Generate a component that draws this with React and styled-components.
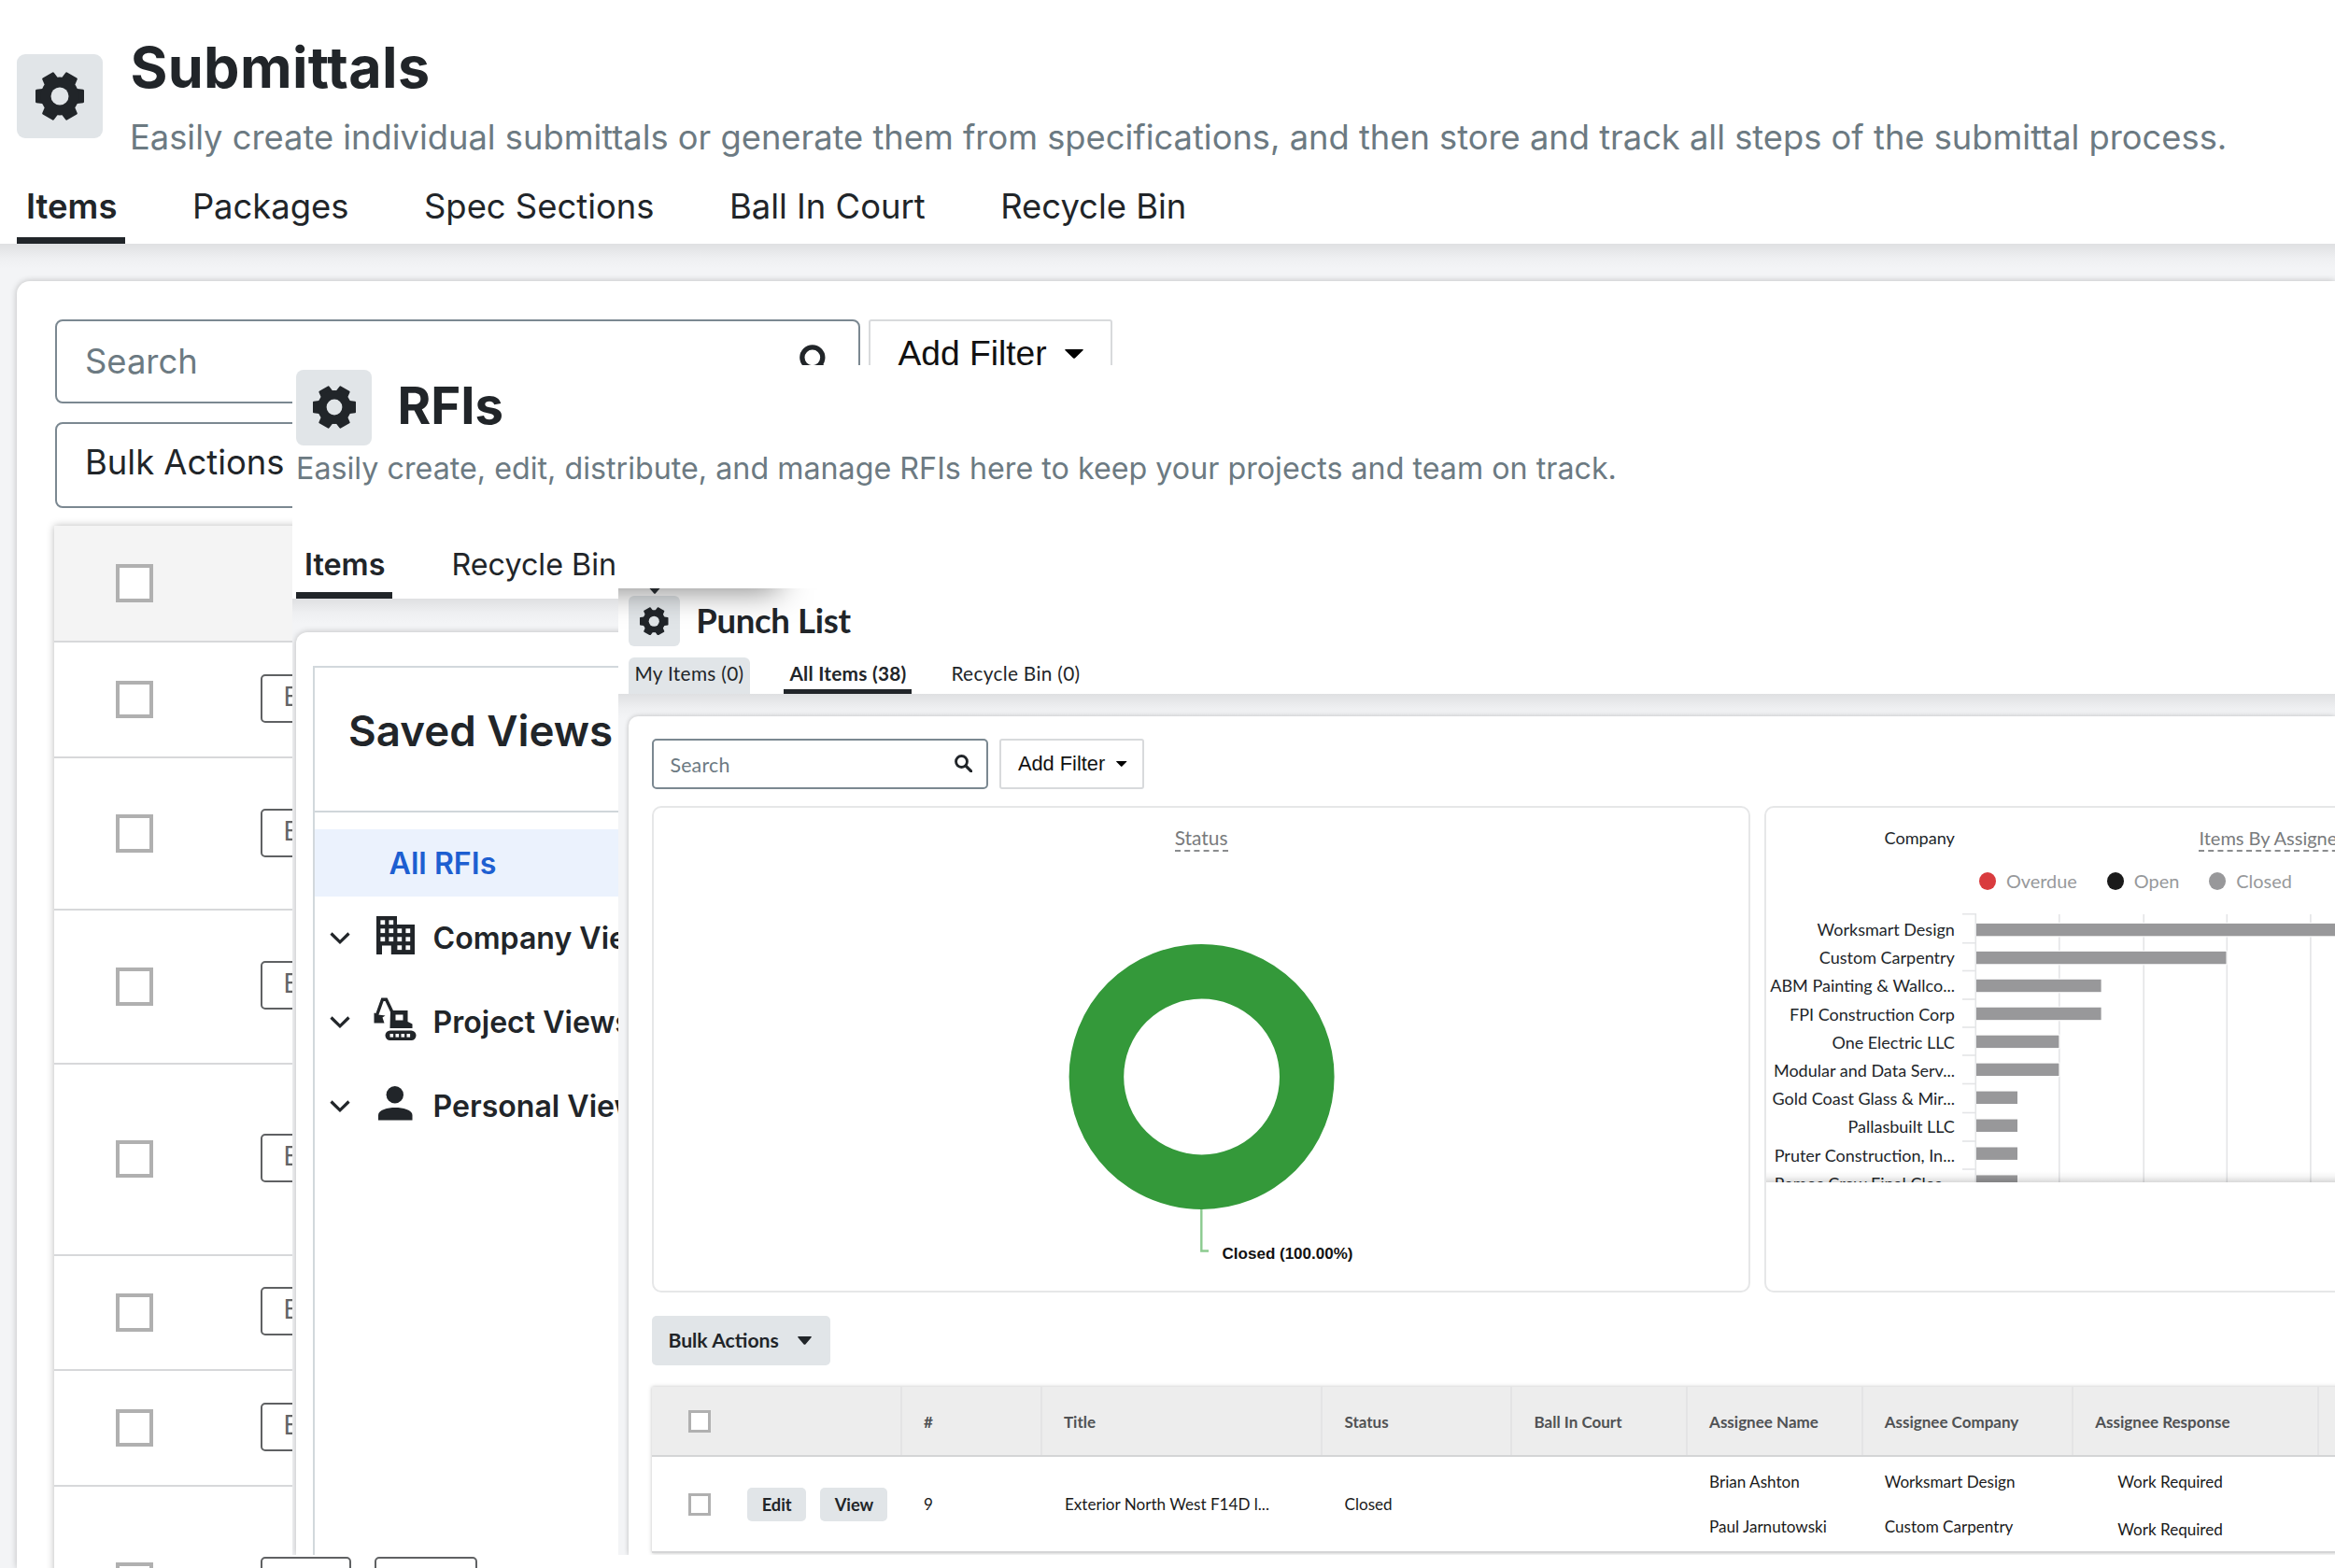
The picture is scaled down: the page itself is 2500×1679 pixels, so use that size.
import React from "react";
import styled, { createGlobalStyle, css } from "styled-components";

const INK = "#212529";
const MUTED = "#6c7a82";
const INTER = `"Inter", "Liberation Sans", sans-serif`;
const LATO = `"Lato", "Liberation Sans", sans-serif`;
const ARIAL = `"Liberation Sans", Arial, sans-serif`;

const Global = createGlobalStyle`
  *, *::before, *::after { box-sizing: border-box; }
  html, body { margin: 0; padding: 0; background: #fff; }
  body { font-family: ${INTER}; color: ${INK}; overflow: hidden; }
`;

/* ---------- shared parts ---------- */

const Desktop = styled.main`
  position: relative;
  width: 2500px;
  height: 1679px;
  overflow: hidden;
  background: #fff;
`;

const windowBase = css`
  position: absolute;
  display: flex;
  flex-direction: column;
  overflow: hidden;
  background: #fff;
  white-space: nowrap;
`;

const GearTile = styled.div`
  display: flex;
  align-items: center;
  justify-content: center;
  flex: none;
  width: ${(p) => p.$w}px;
  height: ${(p) => p.$h}px;
  border-radius: ${(p) => p.$r}px;
  background: #e1e5e8;
  color: ${INK};
`;

const Canvas = styled.section`
  flex: 1;
  min-height: 0;
  display: flex;
  flex-direction: column;
  padding: ${(p) => p.$pad};
  background: linear-gradient(to bottom, #dfe0e2 0, #e6e7e9 7px, #eeeff1 15px, #f3f4f6 26px);
`;

const Sheet = styled.div`
  flex: 1;
  min-height: 0;
  display: flex;
  flex-direction: column;
  align-items: flex-start;
  padding: ${(p) => p.$pad};
  border-radius: ${(p) => p.$r}px 0 0 0;
  background: #fff;
  box-shadow: 0 0 ${(p) => p.$blur || 7}px rgba(0, 0, 0, 0.24);
`;

const Checkbox = styled.span`
  flex: none;
  width: ${(p) => p.$s}px;
  height: ${(p) => p.$s}px;
  border: ${(p) => p.$b}px solid #b0b0b0;
  background: #fff;
`;

const CaretShape = styled.svg`
  flex: none;
  display: block;
`;

const Caret = ({ w, h, color = "#000" }) => (
  <CaretShape width={w} height={h} viewBox="0 0 10 6" preserveAspectRatio="none">
    <path d="M0.6 0h8.8q1 0 .3.8L5.6 5.6q-.6.6-1.2 0L.3.8Q-.4 0 .6 0z" fill={color} />
  </CaretShape>
);

const Gear = ({ size }) => (
  <svg width={size} height={size} viewBox="-26 -26 52 52">
    <g fill="currentColor">
      {[0, 60, 120, 180, 240, 300].map((a) => (
        <path key={a} transform={`rotate(${a})`} d="M13 -12 L18.5 -8 L25 -7.2 Q26 -7 26 -6 L26 6 Q26 7 25 7.2 L18.5 8 L13 12z" />
      ))}
      <circle r="20.4" />
    </g>
    <circle r="9.5" fill="#e1e5e8" />
  </svg>
);

const Magnifier = ({ size }) => (
  <svg width={size} height={size} viewBox="0 0 19 19" fill="none" stroke={INK} strokeLinecap="round">
    <circle cx="7.3" cy="7.3" r="5.8" strokeWidth="2.8" />
    <path d="M11.8 11.8L17.3 17.3" strokeWidth="3.1" />
  </svg>
);

const searchBase = css`
  display: flex;
  align-items: center;
  justify-content: space-between;
  border: 2px solid #7b8891;
  background: #fff;
  color: ${MUTED};
`;

const filterBase = css`
  display: flex;
  align-items: center;
  border: 2px solid #d8dadc;
  border-radius: 3px;
  background: #fff;
  color: #111;
  font-family: ${ARIAL};
`;

/* ---------- Submittals ---------- */

const SubmittalsWindow = styled.section`
  ${windowBase}
  inset: 0;
`;

const SubHeader = styled.header`
  display: flex;
  flex-direction: column;
  justify-content: space-between;
  flex: none;
  height: 261px;
  padding-left: 18px;
`;

const SubHeading = styled.div`
  display: flex;
  gap: 29.5px;
  & > :first-child { margin-top: 58px; }
`;

const SubTitle = styled.h1`
  margin: 42px 0 23px;
  font: 700 61px/60px ${INTER};
  letter-spacing: 0.35px;
`;

const SubLead = styled.p`
  margin: 0 0 0 -0.5px;
  font: 400 36.3px/44px ${INTER};
  color: ${MUTED};
`;

const SubTabs = styled.nav`
  display: flex;
  gap: 62px;
  height: 62px;
`;

const SubTab = styled.span`
  padding: 0 8.5px 0 10px;
  font: ${(p) => (p.$on ? 600 : 400)} 36.4px/44px ${INTER};
  border-bottom: 7px solid ${(p) => (p.$on ? INK : "transparent")};
`;

const SubFilters = styled.div`
  display: flex;
  flex: none;
  gap: 9px;
`;

const SubSearch = styled.div`
  ${searchBase}
  width: 862px;
  height: 90px;
  padding: 0 27px 0 30.5px;
  border-radius: 8px;
  font: 400 36.4px/44px ${INTER};
`;

const SubAddFilter = styled.div`
  ${filterBase}
  width: 261px;
  height: 73px;
  padding-left: 30px;
  gap: 19px;
  font-size: 37.2px;
`;

const SubBulk = styled.div`
  flex: none;
  width: 400px;
  height: 92px;
  margin-top: 20px;
  padding: 17px 30.5px;
  border: 2px solid #7b8891;
  border-radius: 8px;
  font: 400 36.4px/48px ${INTER};
`;

const SubTable = styled.div`
  flex: none;
  width: 2500px;
  margin: 19px 0 0 -0.5px;
  box-shadow: 0 0 8px rgba(0, 0, 0, 0.28);
  background: #fff;
`;

const SubRow = styled.div`
  display: flex;
  align-items: center;
  height: ${(p) => p.$h}px;
  padding-left: 65.5px;
  border-bottom: 2px solid #d7d8da;
  background: ${(p) => (p.$head ? "#f4f4f4" : "#fff")};
`;

const SubActions = styled.div`
  display: flex;
  gap: 25px;
  margin: 0 0 2px 115px;
`;

const SubButton = styled.span`
  width: ${(p) => p.$w}px;
  height: 52px;
  padding-left: 22.5px;
  border: 2px solid #5f6163;
  border-radius: 5px;
  font: 400 28px/45px ${INTER};
  color: #626466;
`;

function Submittals() {
  const rows = [124, 163, 164.5, 205, 123.5, 124, 205];
  return (
    <SubmittalsWindow>
      <SubHeader>
        <SubHeading>
          <GearTile $w={92} $h={90} $r={9}><Gear size={52} /></GearTile>
          <div>
            <SubTitle>Submittals</SubTitle>
            <SubLead>
              Easily create individual submittals or generate them from specifications, and then store and track all steps of the submittal process.
            </SubLead>
          </div>
        </SubHeading>
        <SubTabs>
          <SubTab $on>Items</SubTab>
          <SubTab>Packages</SubTab>
          <SubTab>Spec Sections</SubTab>
          <SubTab>Ball In Court</SubTab>
          <SubTab>Recycle Bin</SubTab>
        </SubTabs>
      </SubHeader>
      <Canvas $pad="40px 0 0 18px">
        <Sheet $pad="41px 0 0 40.5px" $r={14}>
          <SubFilters>
            <SubSearch>Search<Magnifier size={36} /></SubSearch>
            <SubAddFilter>Add Filter<Caret w={20} h={10} /></SubAddFilter>
          </SubFilters>
          <SubBulk>Bulk Actions</SubBulk>
          <SubTable>
            <SubRow $head $h={125}><Checkbox $s={40.5} $b={4} /></SubRow>
            {rows.map((h, i) => (
              <SubRow key={i} $h={h}>
                <Checkbox $s={40.5} $b={4} />
                <SubActions>
                  <SubButton $w={96.5}>{i < 6 && "Edit"}</SubButton>
                  {i === 6 && <SubButton $w={110} />}
                </SubActions>
              </SubRow>
            ))}
          </SubTable>
        </Sheet>
      </Canvas>
    </SubmittalsWindow>
  );
}

/* ---------- RFIs ---------- */

const RfiWindow = styled.section`
  ${windowBase}
  left: 313px;
  top: 391px;
  width: 2187px;
  height: 1274px;
`;

const RfiHeader = styled.header`
  display: flex;
  flex-direction: column;
  flex: none;
  height: 250px;
  padding: 4.5px 0 0 4px;
`;

const RfiHeading = styled.div`
  display: flex;
  align-items: center;
  gap: 27.5px;
`;

const RfiTitle = styled.h1`
  margin: 0 0 4px;
  font: 700 54.5px/60px ${INTER};
`;

const RfiLead = styled.p`
  margin: 5px 0 0;
  font: 400 32.25px/40px ${INTER};
  color: ${MUTED};
`;

const RfiTabs = styled.nav`
  display: flex;
  gap: 54.5px;
  height: 57px;
  margin-top: auto;
`;

const RfiTab = styled.span`
  padding: 1px 7.5px 0 9px;
  font: ${(p) => (p.$on ? 600 : 400)} 32.3px/40px ${INTER};
  border-bottom: 7px solid ${(p) => (p.$on ? INK : "transparent")};
`;

const ViewsPanel = styled.aside`
  width: 700px;
  flex: 1;
  display: flex;
  flex-direction: column;
  border: solid #d2d8dc;
  border-width: 2px 0 0 2px;
`;

const ViewsTitle = styled.h2`
  flex: none;
  height: 155px;
  margin: 0 0 18px;
  padding: 40px 0 0 36px;
  border-bottom: 2px solid #d0d6da;
  font: 600 45.7px/56px ${INTER};
`;

const SelectedView = styled.div`
  flex: none;
  height: 72px;
  padding-left: 79.5px;
  background: #ebf2fd;
  color: #1d5fd1;
  font: 600 32.2px/73px ${INTER};
`;

const ViewGroup = styled.div`
  display: flex;
  align-items: center;
  height: 90px;
  padding-left: 15.5px;
  font: 600 32.1px/40px ${INTER};
`;

const GroupIcon = styled.svg`
  flex: none;
  margin: 0 18px 8px 25px;
`;

const Chevron = () => (
  <svg width="22" height="14" viewBox="0 0 22 14" fill="none" stroke={INK} strokeWidth="3.2">
    <path d="M1.5 1.5L11 10.8L20.5 1.5" />
  </svg>
);

const BuildingIcon = () => {
  const cells = [[0, 0], [1, 0], [0, 1], [1, 1], [2, 1], [3, 1], [0, 2], [1, 2], [2, 2], [3, 2], [2, 3], [3, 3]];
  return (
    <GroupIcon width="46" height="46" viewBox="-3 -3 46 46">
      <path d="M0 0H22V9H41V41H15.8V31.5H6V41H0z" fill={INK} />
      {cells.map(([x, y]) => (
        <rect key={`${x}-${y}`} x={4.4 + x * 9} y={4.3 + y * 9} width="4.8" height="4.8" fill="#fff" />
      ))}
    </GroupIcon>
  );
};

const ExcavatorIcon = () => (
  <GroupIcon width="46" height="46" viewBox="0 0 46 46">
    <path d="M3.5 19L9.5 2.2H13.5L20.5 17" fill="none" stroke={INK} strokeWidth="3.4" />
    <path d="M1 16.5L5 18.5L12.5 19.5L9.5 21.5L11.5 27.5H0.5V17z" fill={INK} />
    <path fillRule="evenodd" d="M18 14H36.5V26L41.5 28.5V33H17.5zM23.5 18.5V24.5H31.5V18.5z" fill={INK} />
    <rect x="12.5" y="35.5" width="33" height="10.5" rx="5.2" fill={INK} />
    {[17.5, 23.5, 29.5, 35.5].map((x) => (
      <rect key={x} x={x} y="39" width="3.6" height="3.6" fill="#fff" />
    ))}
  </GroupIcon>
);

const PersonIcon = () => (
  <GroupIcon width="46" height="46" viewBox="-5 -5 46 46">
    <circle cx="17.8" cy="9.3" r="9.2" fill={INK} />
    <path d="M0 36.5V31C0 25.5 10 23 18.2 23S36.5 25.5 36.5 31V36.5z" fill={INK} />
  </GroupIcon>
);

function Rfis() {
  return (
    <RfiWindow>
      <RfiHeader>
        <RfiHeading>
          <GearTile $w={81} $h={81} $r={8}><Gear size={46} /></GearTile>
          <RfiTitle>RFIs</RfiTitle>
        </RfiHeading>
        <RfiLead>Easily create, edit, distribute, and manage RFIs here to keep your projects and team on track.</RfiLead>
        <RfiTabs>
          <RfiTab $on>Items</RfiTab>
          <RfiTab>Recycle Bin</RfiTab>
        </RfiTabs>
      </RfiHeader>
      <Canvas $pad="36px 0 0 4px">
        <Sheet $pad="36px 0 0 18px" $r={12}>
          <ViewsPanel>
            <ViewsTitle>Saved Views</ViewsTitle>
            <SelectedView>All RFIs</SelectedView>
            <ViewGroup><Chevron /><BuildingIcon />Company Views</ViewGroup>
            <ViewGroup><Chevron /><ExcavatorIcon />Project Views</ViewGroup>
            <ViewGroup><Chevron /><PersonIcon />Personal Views</ViewGroup>
          </ViewsPanel>
        </Sheet>
      </Canvas>
    </RfiWindow>
  );
}

/* ---------- Punch List ---------- */

const PunchWindow = styled.section`
  ${windowBase}
  left: 662px;
  top: 630px;
  width: 1838px;
  height: 1035px;
  font-family: ${LATO};
`;

const MenuShadow = styled.div`
  position: absolute;
  left: -60px;
  top: -40px;
  width: 232px;
  height: 40px;
  box-shadow: 0 2px 34px rgba(0, 0, 0, 0.5);
`;

const MenuPointer = styled.div`
  position: absolute;
  left: 33px;
  top: -1px;
`;

const PunchHeader = styled.header`
  display: flex;
  flex-direction: column;
  justify-content: space-between;
  flex: none;
  height: 113px;
  padding: 8px 0 0 11.4px;
`;

const PunchHeading = styled.div`
  display: flex;
  align-items: center;
  gap: 17.4px;
`;

const PunchTitle = styled.h1`
  margin: 0 0 1px;
  font: 700 36.5px/43px ${LATO};
  letter-spacing: -0.3px;
`;

const PunchTabs = styled.nav`
  display: flex;
  gap: 36px;
  height: 39px;
`;

const PunchTab = styled.span`
  padding: 0 6px;
  width: ${(p) => (p.$w ? `${p.$w}px` : "auto")};
  font: ${(p) => (p.$on ? 700 : 400)} 20.8px/33px ${LATO};
  letter-spacing: ${(p) => (p.$on ? 0.25 : 0.33)}px;
  border-bottom: 5px solid ${(p) => (p.$on ? INK : "transparent")};
  border-radius: ${(p) => (p.$tint ? "6px 6px 0 0" : 0)};
  background: ${(p) => (p.$tint ? "#e1e5e8 border-box" : "transparent")};
`;

const PunchFilters = styled.div`
  display: flex;
  flex: none;
  gap: 12px;
`;

const PunchSearch = styled.div`
  ${searchBase}
  width: 360px;
  height: 54px;
  padding: 1px 15px 0 17px;
  border-radius: 5px;
  font: 400 21.4px/26px ${LATO};
  letter-spacing: 0.2px;
  & svg { margin-top: -2px; }
`;

const PunchAddFilter = styled.div`
  ${filterBase}
  width: 155px;
  height: 54px;
  padding-left: 17.5px;
  gap: 12px;
  font-size: 21.8px;
`;

const Charts = styled.div`
  display: flex;
  flex: none;
  gap: 15px;
  height: 521px;
  margin-top: 18px;
`;

const ChartCard = styled.article`
  flex: none;
  width: ${(p) => p.$w}px;
  padding-top: 19px;
  border: 2px solid #e6e7e8;
  border-radius: 10px;
  overflow: hidden;
`;

const ChartTitle = styled.span`
  border-bottom: 2px dashed #8a8c8e;
  font: 400 ${(p) => p.$size}px/26px ${LATO};
  color: #797b7d;
`;

const StatusHead = styled.div`
  display: flex;
  justify-content: center;
`;

const Donut = styled.svg`
  display: block;
`;

const AssigneeHead = styled.div`
  display: flex;
`;

const AxisTitle = styled.span`
  width: 202px;
  margin-right: 261.5px;
  text-align: right;
  font: 400 18.1px/26px ${LATO};
`;

const Legend = styled.div`
  display: flex;
  gap: 32px;
  margin: 18px 0 0 228px;
`;

const LegendItem = styled.span`
  display: flex;
  align-items: center;
  gap: 11px;
  font: 400 19.9px/26px ${LATO};
  color: #97999b;
  &::before {
    content: "";
    width: 18px;
    height: 19px;
    border-radius: 50%;
    background: ${(p) => p.$c};
  }
`;

const Plot = styled.div`
  position: relative;
  display: flex;
  gap: 7px;
  height: 288px;
  margin-top: 22px;
  overflow: hidden;
  &::after {
    content: "";
    position: absolute;
    inset: auto 0 0 0;
    height: 12px;
    background: linear-gradient(to top, rgba(0, 0, 0, 0.15), rgba(0, 0, 0, 0.04) 50%, rgba(0, 0, 0, 0));
  }
`;

const PlotLabels = styled.div`
  flex: none;
  width: 202px;
  padding-top: 2px;
  font: 400 18px/30.2px ${LATO};
  text-align: right;
`;

const PunchBulk = styled.div`
  display: flex;
  flex: none;
  align-items: center;
  gap: 20px;
  width: 191px;
  height: 53px;
  margin-top: 25px;
  padding: 0 0 1px 17px;
  border-radius: 5px;
  background: #e1e5e8;
  font: 700 21.2px/26px ${LATO};
`;

const PunchTable = styled.div`
  flex: none;
  width: 1900px;
  margin-top: 23px;
  background: #fff;
  box-shadow: 0 0 4px rgba(0, 0, 0, 0.25);
  font: 400 17.1px/26px ${LATO};
  color: #1a1a1a;
`;

const PunchRow = styled.div`
  display: grid;
  grid-template-columns: 265.6px 150px 300.5px 203px 187.6px 187.6px 225.6px 262.4px 100px;
  height: ${(p) => p.$h}px;
  border-bottom: 2px solid #d4d5d6;
  background: ${(p) => (p.$head ? "#ededed" : "#fff")};
`;

const HeadCell = styled.div`
  display: flex;
  align-items: center;
  padding: 2px 0 0 23px;
  border-left: 2px solid #e4e4e5;
  font-weight: 700;
  font-size: 17px;
  color: #505254;
`;

const Cell = styled.div`
  display: flex;
  flex-direction: column;
  justify-content: center;
  gap: ${(p) => p.$gap || 0}px;
  padding-left: ${(p) => p.$indent || 25}px;
  padding-top: ${(p) => p.$drop || 0}px;
`;

const SelectCell = styled.div`
  display: flex;
  align-items: center;
  gap: 15.6px;
  padding-left: 39px;
  & > :first-child { margin-right: 23.5px; }
`;

const SmallButton = styled.span`
  width: ${(p) => p.$w}px;
  height: 36px;
  border-radius: 5px;
  background: #e1e5e8;
  text-align: center;
  font: 700 18.3px/36px ${LATO};
  color: ${INK};
`;

const assignees = [
  ["Worksmart Design", 420], ["Custom Carpentry", 267.5], ["ABM Painting & Wallco...", 133.6],
  ["FPI Construction Corp", 133.6], ["One Electric LLC", 88.4], ["Modular and Data Serv...", 88.4],
  ["Gold Coast Glass & Mir...", 44], ["Pallasbuilt LLC", 44], ["Pruter Construction, In...", 44],
  ["Ramos Crew Final Clea...", 44],
];

const columns = ["#", "Title", "Status", "Ball In Court", "Assignee Name", "Assignee Company", "Assignee Response", ""];

function PunchList() {
  return (
    <PunchWindow>
      <PunchHeader>
        <PunchHeading>
          <GearTile $w={54.4} $h={54} $r={6}><Gear size={30.5} /></GearTile>
          <PunchTitle>Punch List</PunchTitle>
        </PunchHeading>
        <PunchTabs>
          <PunchTab $tint $w={130}>My Items (0)</PunchTab>
          <PunchTab $on $w={137}>All Items (38)</PunchTab>
          <PunchTab>Recycle Bin (0)</PunchTab>
        </PunchTabs>
      </PunchHeader>
      <Canvas $pad="24px 0 0 11.4px">
        <Sheet $pad="24px 0 0 25px" $r={10} $blur={5}>
          <PunchFilters>
            <PunchSearch>Search<Magnifier size={19.5} /></PunchSearch>
            <PunchAddFilter>Add Filter<Caret w={11.5} h={6} /></PunchAddFilter>
          </PunchFilters>
          <Charts>
            <ChartCard $w={1175.5}>
              <StatusHead><ChartTitle $size={20.9}>Status</ChartTitle></StatusHead>
              <Donut width="1171" height="467" viewBox="0 0 1171 467">
                <circle cx="586.6" cy="241" r="112.7" fill="none" stroke="#34993a" strokeWidth="58.6" />
                <path d="M586.3 383V427.5H594" fill="none" stroke="#8ccb90" strokeWidth="2.4" />
                <text x="608.6" y="435.5" fontFamily={ARIAL} fontWeight="700" fontSize="17" fill="#111">Closed (100.00%)</text>
              </Donut>
            </ChartCard>
            <ChartCard $w={900}>
              <AssigneeHead>
                <AxisTitle>Company</AxisTitle>
                <ChartTitle $size={20}>Items By Assignee</ChartTitle>
              </AssigneeHead>
              <Legend>
                <LegendItem $c="#d93b3e">Overdue</LegendItem>
                <LegendItem $c="#1a1a1a">Open</LegendItem>
                <LegendItem $c="#98989a">Closed</LegendItem>
              </Legend>
              <Plot>
                <PlotLabels>
                  {assignees.map(([name]) => <div key={name}>{name}</div>)}
                </PlotLabels>
                <svg width="500" height="300" viewBox="0 0 500 300">
                  <g stroke="#e4e5e7" strokeWidth="1.6">
                    {[104.8, 195.2, 284.3, 373.9].map((x) => <path key={x} d={`M${x} 1V300`} />)}
                    <path d="M15.3 0V300" />
                    {[0.8, 31.7, 61.5, 92, 122, 152, 182.5, 213.5, 244, 274].map((y) => <path key={y} d={`M1 ${y}H15.3`} />)}
                  </g>
                  {assignees.map(([name, w], i) => (
                    <g key={name}>
                      <rect x="16.5" y={9.8 + i * 29.95} width={w + 0.5} height="15.6" fill="#fff" />
                      <rect x="16" y={10.9 + i * 29.95} width={w} height="13.4" fill="#98989a" />
                    </g>
                  ))}
                </svg>
              </Plot>
            </ChartCard>
          </Charts>
          <PunchBulk>Bulk Actions<Caret w={15} h={9} color={INK} /></PunchBulk>
          <PunchTable>
            <PunchRow $head $h={75}>
              <SelectCell><Checkbox $s={24} $b={3} /></SelectCell>
              {columns.map((c, i) => <HeadCell key={i}>{c}</HeadCell>)}
            </PunchRow>
            <PunchRow $h={103}>
              <SelectCell>
                <Checkbox $s={24} $b={3} />
                <SmallButton $w={62.4}>Edit</SmallButton>
                <SmallButton $w={72}>View</SmallButton>
              </SelectCell>
              <Cell>9</Cell>
              <Cell $indent={26}>Exterior North West F14D l...</Cell>
              <Cell>Closed</Cell>
              <Cell />
              <Cell $gap={22}><span>Brian Ashton</span><span>Paul Jarnutowski</span></Cell>
              <Cell $gap={22}><span>Worksmart Design</span><span>Custom Carpentry</span></Cell>
              <Cell $indent={49} $gap={25} $drop={3}><span>Work Required</span><span>Work Required</span></Cell>
            </PunchRow>
          </PunchTable>
        </Sheet>
      </Canvas>
      <MenuShadow />
      <MenuPointer><Caret w={12} h={7} color={INK} /></MenuPointer>
    </PunchWindow>
  );
}

export default function App() {
  return (
    <>
      <Global />
      <Desktop>
        <Submittals />
        <Rfis />
        <PunchList />
      </Desktop>
    </>
  );
}
